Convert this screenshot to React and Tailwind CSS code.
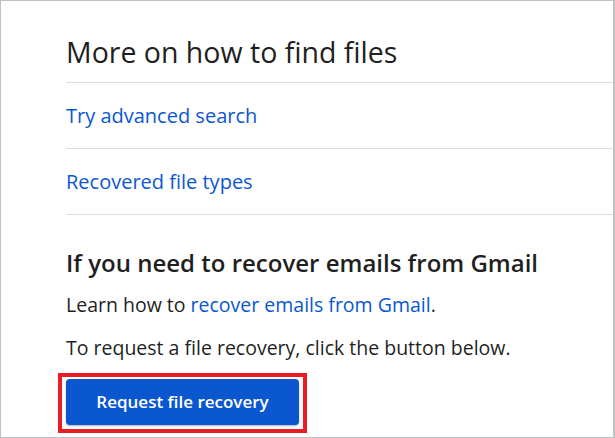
export default function App() {
  return (
    <div className="w-[615px] h-[438px] bg-white border-t border-l border-b border-r-2 border-[#bcc3c2] overflow-hidden font-['Open_Sans',sans-serif] text-[#1f1f1f]">
      <div className="pl-[65px]">
        <div className="border-b border-[#dadce0] pt-[33px] pb-[12px]">
          <h1 className="text-[28.5px] leading-[36px] font-normal">More on how to find files</h1>
        </div>
        <div className="h-[66px] flex items-center border-b border-[#dadce0]">
          <a className="text-[20px] text-[#0b57d0]">Try advanced search</a>
        </div>
        <div className="h-[66px] flex items-center border-b border-[#dadce0]">
          <a className="text-[20px] text-[#0b57d0]">Recovered file types</a>
        </div>
        <h2 className="mt-[33px] text-[24px] leading-[30px] font-semibold">If you need to recover emails from Gmail</h2>
        <p className="mt-[14px] text-[19.5px] leading-[26px]">
          Learn how to <a className="text-[#0b57d0]">recover emails from Gmail</a>.
        </p>
        <p className="mt-[17px] text-[19.5px] leading-[26px]">To request a file recovery, click the button below.</p>
        <div className="-ml-[8px] mt-[12px] w-[249px] h-[60px] border-4 border-[#ec1c24] px-[4px] py-[2px]">
          <button className="w-full h-[46px] rounded-[4px] bg-[#0b57d0] text-white text-[17px] font-semibold shadow-[0_1px_2px_rgba(0,0,0,0.3)]">
            Request file recovery
          </button>
        </div>
      </div>
    </div>
  );
}
